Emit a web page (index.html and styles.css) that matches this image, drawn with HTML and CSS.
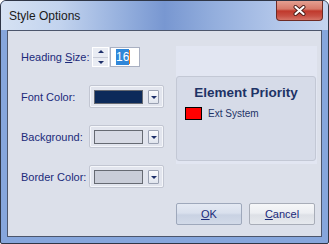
FILE: index.html
```html
<!DOCTYPE HTML>
<html>
<head>
<meta http-equiv="Content-Type" content="text/html; charset=utf-8">
<title>Style Options</title>
<link rel="stylesheet" href="styles.css">
</head>

<body>
	<div class="window">
		<div class="titlebar">
			<span class="title">Style Options</span>
			<a href="javascript:;" class="close">
				<svg width="13" height="11" viewBox="0 0 13 11">
					<path d="M2.5 2L10.5 9M10.5 2L2.5 9" stroke="#4a1c18" stroke-width="4" stroke-linecap="round"/>
					<path d="M2.5 2L10.5 9M10.5 2L2.5 9" stroke="#fff" stroke-width="2.2" stroke-linecap="round"/>
				</svg>
			</a>
		</div>
		<div class="client">
			<div class="main">
				<div class="form">
					<div class="row">
						<label>Heading <u>S</u>ize:</label>
						<div class="spinner">
							<span class="up"></span>
							<span class="down"></span>
						</div>
						<div class="numbox"><span class="sel">16</span><span class="caret"></span></div>
					</div>
					<div class="row">
						<label>Font Color:</label>
						<div class="combo">
							<span class="swatch font"></span>
							<span class="drop"></span>
						</div>
					</div>
					<div class="row">
						<label>Background:</label>
						<div class="combo">
							<span class="swatch back"></span>
							<span class="drop"></span>
						</div>
					</div>
					<div class="row">
						<label>Border Color:</label>
						<div class="combo">
							<span class="swatch border"></span>
							<span class="drop"></span>
						</div>
					</div>
				</div>
				<div class="panel">
					<div class="group">
						<h2>Element Priority</h2>
						<div class="item"><span class="box"></span>Ext System</div>
					</div>
				</div>
			</div>
			<div class="buttons">
				<a href="javascript:;" class="btn"><u>O</u>K</a>
				<a href="javascript:;" class="btn"><u>C</u>ancel</a>
			</div>
		</div>
	</div>
</body>
</html>
```

FILE: styles.css
```css
body { margin: 0; background: #fff; font-family: "Liberation Sans", Arial, sans-serif; }

.window { width: 329px; height: 244px; box-sizing: border-box; border: 1px solid #2f3646; border-radius: 6px 6px 2px 2px; padding: 0 6px 6px; background: #86a6dc; display: flex; flex-direction: column; overflow: hidden; }

.titlebar { flex-shrink: 0; height: 29px; margin: 0 -6px; padding: 0 5px 0 8px; display: flex; align-items: center;
	background: linear-gradient(90deg, #d6e2f3 0%, #c2d3ee 18%, #93aedd 38%, #7897d1 50%, #93aedd 65%, #b3c7ea 85%, #c4d4ef 100%); }
.title { font-size: 12px; color: #1a1a1a; margin-top: 1px; }
.close { margin-left: auto; align-self: flex-start; margin-top: -1px; width: 47px; height: 21px; box-sizing: border-box; border: 1px solid #6e2a24; border-top: none; border-radius: 0 0 4px 4px; display: flex; align-items: center; justify-content: center;
	background: linear-gradient(#e6a496 0%, #d77a6a 45%, #c0392c 55%, #c85044 80%, #d67466 100%); }
.close svg { display: block; }

.client { flex: 1; min-height: 0; border: 1px solid #4c566c; background: #dce0ea; display: flex; flex-direction: column; padding: 15px 0 0 13px; }

.main { display: flex; }
.form { width: 155px; display: flex; flex-direction: column; gap: 17px; }
.row { display: flex; align-items: center; height: 23px; }
.row:first-child { height: 22px; }
.row label { width: 68px; flex-shrink: 0; white-space: nowrap; font-size: 11px; color: #1b2a7a; }

.spinner { width: 17px; height: 20px; margin-left: 3px; flex-shrink: 0; display: flex; flex-direction: column; background: #e9ecf3; border: 1px solid #fff; box-sizing: border-box; }
.spinner span { flex: 1; position: relative; }
.spinner .up { border-bottom: 1px solid #c8ccd8; }
.spinner .up:after { content: ""; position: absolute; left: 5px; top: 2px; border: 3px solid transparent; border-bottom: 3px solid #1d2f6a; border-top: none; }
.spinner .down:after { content: ""; position: absolute; left: 5px; top: 3px; border: 3px solid transparent; border-top: 3px solid #1d2f6a; border-bottom: none; }

.numbox { width: 30px; height: 20px; margin-left: 1px; flex-shrink: 0; box-sizing: border-box; background: #fff; border: 1px solid #a9b0c2; display: flex; align-items: center; padding-left: 5px; font-size: 12px; }
.numbox .sel { background: #3087d9; color: #fff; padding: 1px 0; line-height: 14px; }
.numbox .caret { width: 1px; height: 14px; background: #f08020; }

.combo { width: 75px; height: 23px; box-sizing: border-box; border: 1px solid #c2c6d2; border-radius: 2px; box-shadow: inset 0 0 0 1px #f4f6fa; background: #e2e5ee; display: flex; align-items: center; padding-left: 4px; }
.swatch { width: 49px; height: 14px; box-sizing: border-box; border: 1px solid #666a72; }
.swatch.font { background: #0c2a5a; }
.swatch.back { background: #d7dae4; }
.swatch.border { background: #c9cdd8; }
.drop { width: 11px; height: 14px; margin-left: 5px; box-sizing: border-box; border: 1px solid #9aa1b2; border-radius: 1px; background: linear-gradient(#fbfcfe, #e1e5ee); position: relative; }
.drop:after { content: ""; position: absolute; left: 2px; top: 5px; border: 3px solid transparent; border-top: 3px solid #1d2f6a; border-bottom: none; }

.panel { width: 141px; height: 118px; background: #e2e6f2; display: flex; flex-direction: column; padding-top: 30px; box-sizing: border-box; }
.group { height: 85px; margin-right: 1px; box-sizing: border-box; border: 1px solid #c3c8d5; border-radius: 3px; background: #d6dbe8; }
.group h2 { margin: 8px 0 0; text-align: center; font-size: 13.5px; font-weight: bold; color: #1e3366; }
.item { display: flex; align-items: center; margin: 7px 0 0 8px; font-size: 10px; color: #1e3366; }
.item .box { width: 17px; height: 13px; box-sizing: border-box; border: 1px solid #000; background: #f00; margin-right: 6px; }

.buttons { display: flex; justify-content: flex-end; gap: 7px; margin-top: 15px; padding-right: 6px; }
.btn { width: 66px; height: 22px; box-sizing: border-box; border: 1px solid #a8adb8; border-radius: 2px; text-align: center; line-height: 20px; font-size: 11px; color: #1b2a7a; text-decoration: none;
	background: linear-gradient(#f6f7f9 0%, #eceef2 45%, #dde0e6 55%, #e6e9ee 100%); }
.btn:first-child { background: linear-gradient(#e4e9f3 0%, #d9e0ed 45%, #c9d2e3 55%, #d2dae8 100%); border-color: #9ea8bb; }
```
